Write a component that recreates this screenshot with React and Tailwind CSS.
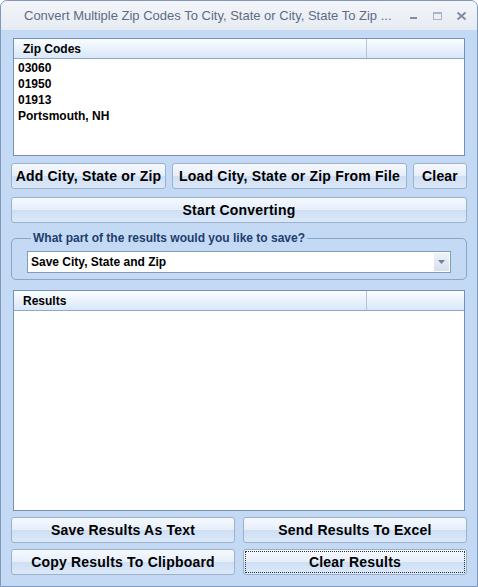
import React from "react"

const btn =
  "flex items-center justify-center h-[26px] rounded-[3px] border border-[#9bb1cf] bg-[linear-gradient(#f6f9fe_0%,#e6eefa_50%,#cfdff4_51%,#dbe8f8_100%)] text-[14px] font-bold text-black tracking-[0.2px]"

function ListBox({ title, items, height }) {
  return (
    <div className={`mx-[2px] border border-[#7590b4] bg-white ${height}`}>
      <div className="flex h-[20px] border-b border-[#8ea8ca] bg-[linear-gradient(#fbfdff,#d9e7f9)]">
        <div className="w-[353px] border-r border-[#b2c4dc] pl-[9px] text-[12px] font-bold leading-[20px] text-black">{title}</div>
        <div className="flex-1" />
      </div>
      <div className="pl-[4px] pt-[1px]">
        {items.map(t => (
          <div key={t} className="h-[16px] text-[12px] font-bold leading-[16px] text-black">{t}</div>
        ))}
      </div>
    </div>
  )
}

export default function App() {
  return (
    <div className="flex h-[587px] w-[478px] flex-col overflow-hidden rounded-t-[7px] border border-[#7e98bc] bg-[#c3d9f4] font-['Liberation_Sans',Arial,sans-serif]">
      {/* title bar */}
      <div className="flex h-[29px] shrink-0 items-center bg-[linear-gradient(#f3f5f9,#e6ebf3)] pl-[23px] pr-[10px]">
        <span className="flex-1 truncate text-[13px] text-[#5d6d84]">
          Convert Multiple Zip Codes To City, State or City, State To Zip ...
        </span>
        <div className="flex items-center gap-[13px]">
          <svg width="10" height="10" viewBox="0 0 10 10"><rect x="1" y="6" width="7" height="2" fill="#7f8ea3" /></svg>
          <svg width="11" height="10" viewBox="0 0 11 10"><rect x="1.5" y="1.5" width="8" height="7" fill="none" stroke="#a9b4c3" /><rect x="1" y="1" width="9" height="2" fill="#a9b4c3" /></svg>
          <svg width="11" height="10" viewBox="0 0 11 10"><path d="M1.5 1.5 L9.5 8.5 M9.5 1.5 L1.5 8.5" stroke="#7f8ea3" strokeWidth="2" /></svg>
        </div>
      </div>

      <div className="flex flex-1 flex-col px-[10px] pt-[8px]">
        <ListBox title="Zip Codes" items={["03060", "01950", "01913", "Portsmouth, NH"]} height="h-[118px]" />

        <div className="mt-[7px] flex gap-[6px]">
          <button className={`${btn} w-[155px]`}>Add City, State or Zip</button>
          <button className={`${btn} w-[235px]`}>Load City, State or Zip From File</button>
          <button className={`${btn} flex-1`}>Clear</button>
        </div>

        <button className={`${btn} mt-[8px] w-full`}>Start Converting</button>

        <fieldset className="mt-[6px] h-[51px] rounded-[5px] border border-[#8aa5c9] px-[15px]">
          <legend className="ml-[4px] px-[2px] text-[12px] font-bold text-[#1e3e6e]">What part of the results would you like to save?</legend>
          <div className="mt-[4px] flex h-[22px] border border-[#7f9db9] bg-white">
            <div className="flex-1 pl-[3px] text-[12px] font-bold leading-[20px] text-black">Save City, State and Zip</div>
            <div className="m-[1px] flex w-[15px] items-center justify-center bg-[linear-gradient(#eef3fa,#d5e0ee)]">
              <svg width="7" height="4" viewBox="0 0 7 4"><path d="M0 0 H7 L3.5 4 Z" fill="#6f7f95" /></svg>
            </div>
          </div>
        </fieldset>

        <div className="mt-[10px]">
          <ListBox title="Results" items={[]} height="h-[221px]" />
        </div>

        <div className="mt-[6px] grid grid-cols-2 gap-x-[8px] gap-y-[6px]">
          <button className={btn}>Save Results As Text</button>
          <button className={btn}>Send Results To Excel</button>
          <button className={btn}>Copy Results To Clipboard</button>
          <button className={`${btn} outline-1 outline-dotted outline-offset-[-3px] outline-[#333]`}>Clear Results</button>
        </div>
      </div>
    </div>
  )
}
